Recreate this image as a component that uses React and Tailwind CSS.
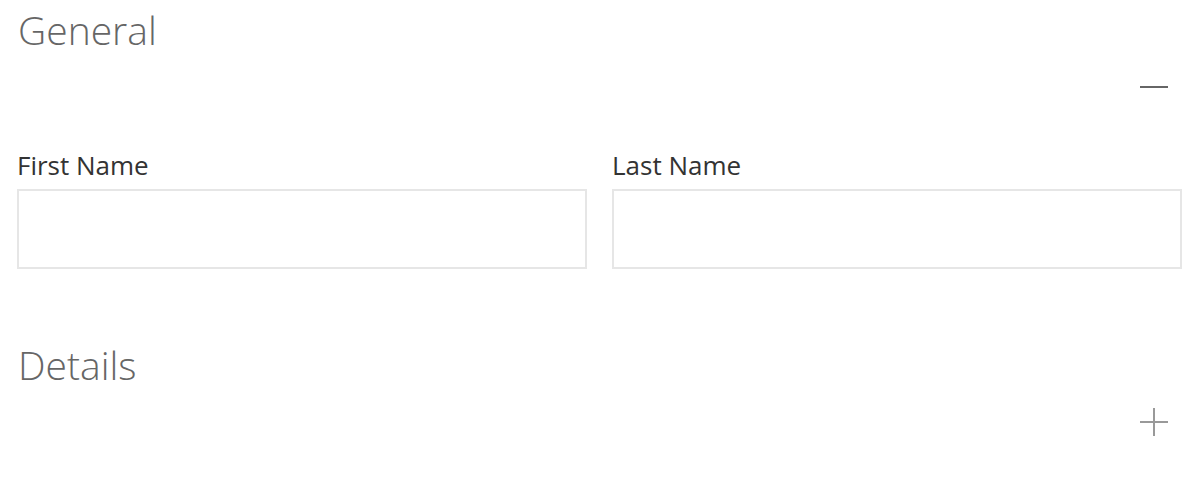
import React, { useState } from "react";

const MinusIcon = () => (
  <svg width="28" height="28" viewBox="0 0 28 28" fill="none">
    <path d="M0 14h28" stroke="#666" strokeWidth="2" />
  </svg>
);

const PlusIcon = () => (
  <svg width="28" height="28" viewBox="0 0 28 28" fill="none">
    <path d="M0 14h28M14 0v28" stroke="#999" strokeWidth="2" />
  </svg>
);

const Field = ({ label }) => (
  <label className="flex flex-col">
    <span className="text-[26px] leading-[32px] text-[#333]">{label}</span>
    <input
      type="text"
      className="mt-[8px] h-[80px] border-2 border-[#e6e6e6] bg-white px-3 outline-none"
    />
  </label>
);

export default function App() {
  const [generalOpen, setGeneralOpen] = useState(true);
  const [detailsOpen, setDetailsOpen] = useState(false);

  return (
    <div className="w-[1200px] h-[487px] bg-white pl-[17px] pr-[18px] font-['Segoe_UI','Open_Sans',sans-serif]">
      {/* General */}
      <section>
        <h2 className="pl-px text-[39px] font-light leading-[60px] text-[#666]">General</h2>
        <div className="flex justify-end pr-[14px]">
          <button onClick={() => setGeneralOpen(!generalOpen)} className="mt-[13px]">
            {generalOpen ? <MinusIcon /> : <PlusIcon />}
          </button>
        </div>
        {generalOpen && (
          <div className="mt-[48px] grid grid-cols-2 gap-[25px]">
            <Field label="First Name" />
            <Field label="Last Name" />
          </div>
        )}
      </section>

      {/* Details */}
      <section className="mt-[66px]">
        <h2 className="pl-px text-[39px] font-light leading-[60px] text-[#666]">Details</h2>
        <div className="flex justify-end pr-[14px]">
          <button onClick={() => setDetailsOpen(!detailsOpen)} className="mt-[13px]">
            {detailsOpen ? <MinusIcon /> : <PlusIcon />}
          </button>
        </div>
      </section>
    </div>
  );
}
